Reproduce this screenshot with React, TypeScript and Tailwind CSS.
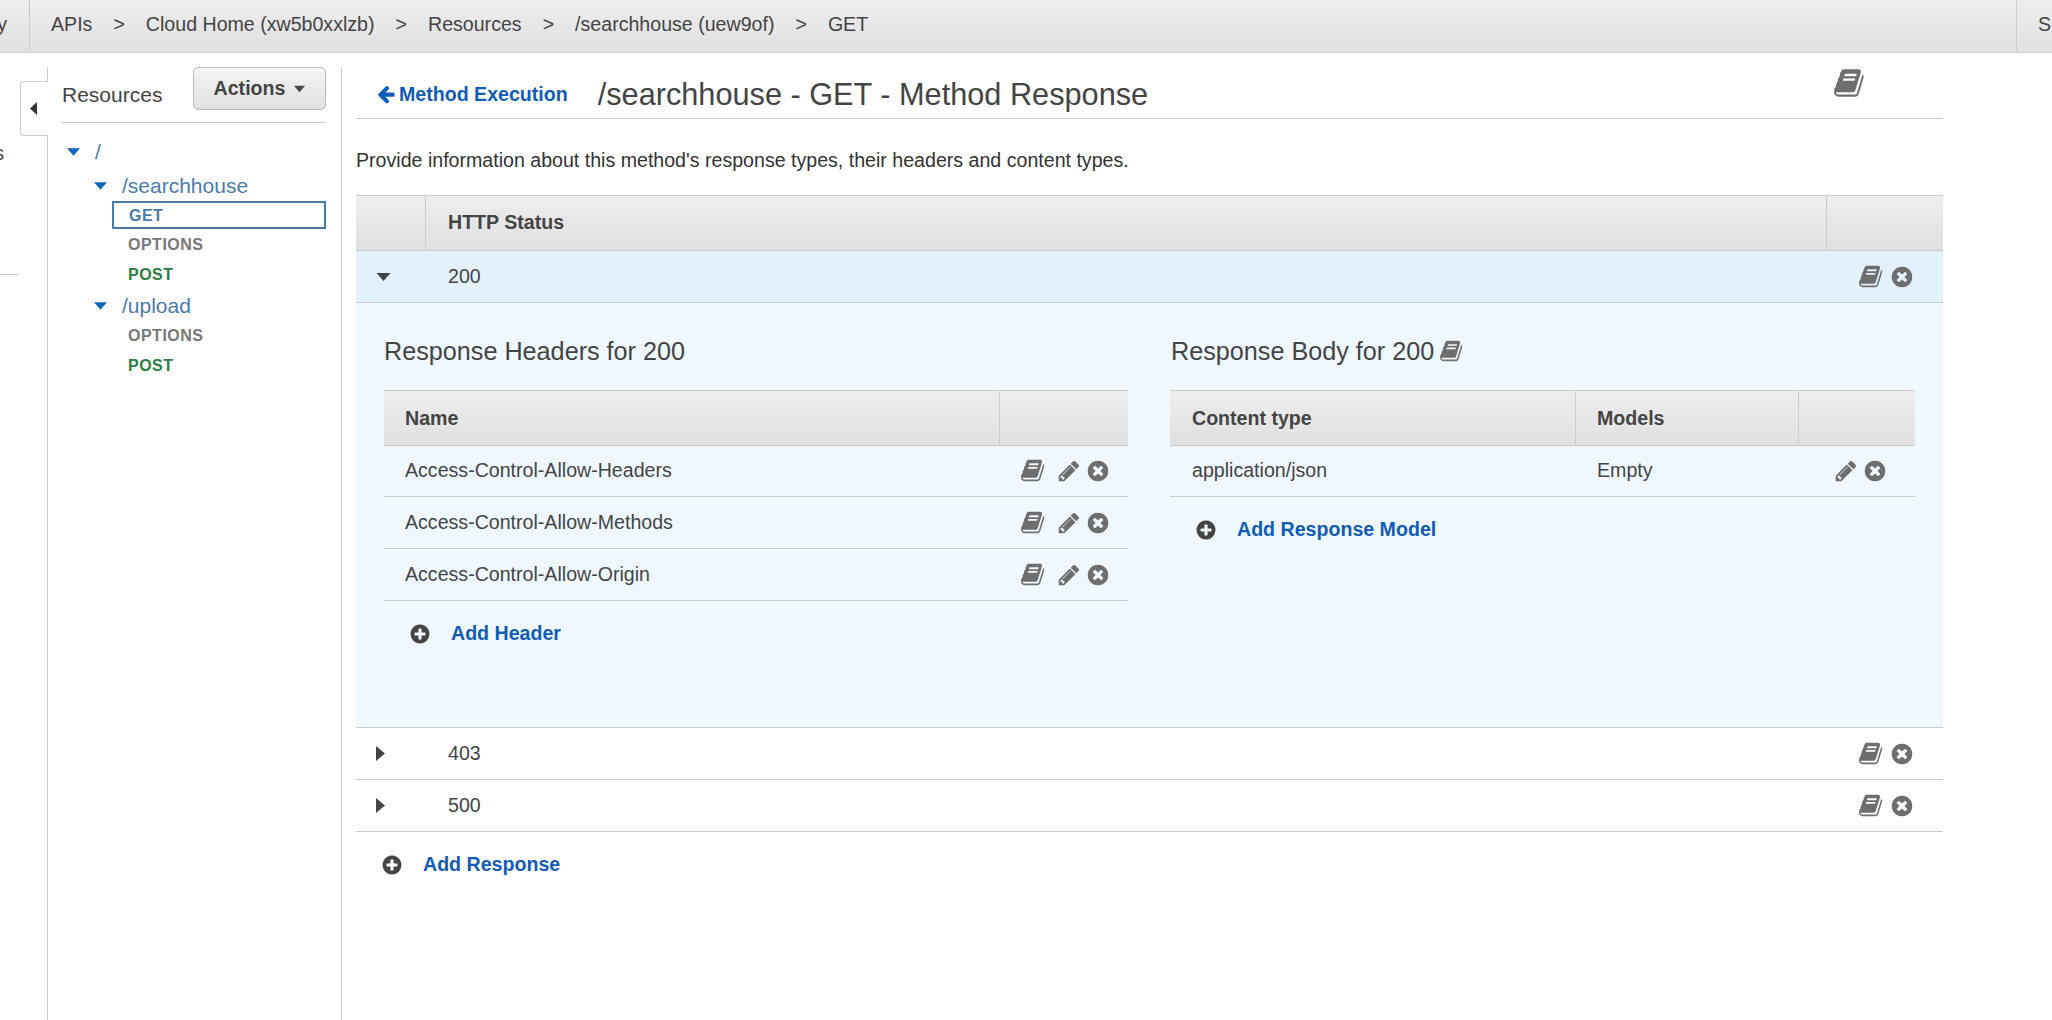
const BOOK = "M1639 478q40 57 18 129l-275 906q-19 64-76.5 107.5t-122.5 43.5h-923q-77 0-148.5-53.5t-99.5-131.5q-24-67-2-127 0-4 3-27t4-37q1-8-3-21.5t-3-19.5q2-11 8-21t16.5-23.5 16.5-23.5q23-38 45-91.5t30-91.5q3-10 .5-30t-.5-28q3-11 17-28t17-23q21-36 42-92t25-90q1-9-2.5-32t.5-28q4-13 22-30.5t22-22.5q19-26 42.5-84.5t27.5-96.5q1-8-3-25.5t-2-26.5q2-8 9-18t18-23 17-21q8-12 16.5-30.5t15-35 16-36 19.5-32 26.5-23.5 36-11.5 47.5 5.5l-1 3q38-9 51-9h761q74 0 114 56t18 130l-274 906q-36 119-71.5 153.5t-128.5 34.5h-869q-27 0-38 15-11 16-1 43 24 70 144 70h923q29 0 56-15.5t35-41.5l300-987q7-22 5-57 38 15 59 43zm-1064 2q-4 13 2 22.5t20 9.5h608q13 0 25.5-9.5t16.5-22.5l21-64q4-13-2-22.5t-20-9.5h-608q-13 0-25.5 9.5t-16.5 22.5zm-83 256q-4 13 2 22.5t20 9.5h608q13 0 25.5-9.5t16.5-22.5l21-64q4-13-2-22.5t-20-9.5h-608q-13 0-25.5 9.5t-16.5 22.5z";
const PENCIL = "M491 1536l91-91-235-235-91 91v107h128v128h107zm523-928q0-22-22-22-10 0-17 7l-542 542q-7 7-7 17 0 22 22 22 10 0 17-7l542-542q7-7 7-17zm-54-192l416 416-832 832h-416v-416zm683 96q0 53-37 90l-166 166-416-416 166-165q36-38 90-38 53 0 91 38l235 234q37 39 37 91z";
const TIMES = "M1277 1122q0-26-19-45l-181-181 181-181q19-19 19-45 0-27-19-46l-90-90q-19-19-46-19-26 0-45 19l-181 181-181-181q-19-19-45-19-27 0-46 19l-90 90q-19 19-19 46 0 26 19 45l181 181-181 181q-19 19-19 45 0 27 19 46l90 90q19 19 46 19 26 0 45-19l181-181 181 181q19 19 45 19 27 0 46-19l90-90q19-19 19-46zm387-226q0 209-103 385.5t-279.5 279.5-385.5 103-385.5-103-279.5-279.5-103-385.5 103-385.5 279.5-279.5 385.5-103 385.5 103 279.5 279.5 103 385.5z";
const PLUS = "M1344 960v-128q0-26-19-45t-45-19h-256v-256q0-26-19-45t-45-19h-128q-26 0-45 19t-19 45v256h-256q-26 0-45 19t-19 45v128q0 26 19 45t45 19h256v256q0 26 19 45t45 19h128q26 0 45-19t19-45v-256h256q26 0 45-19t19-45zm320-64q0 209-103 385.5t-279.5 279.5-385.5 103-385.5-103-279.5-279.5-103-385.5 103-385.5 279.5-279.5 385.5-103 385.5 103 279.5 279.5 103 385.5z";
const ARROW = "M1664 896v128q0 53-32.5 90.5t-84.5 37.5h-704l293 294q38 36 38 90t-38 90l-75 76q-37 37-90 37-52 0-91-37l-651-652q-37-37-37-90 0-52 37-91l651-650q38-38 91-38 52 0 90 38l75 74q38 38 38 91t-38 91l-293 293h704q52 0 84.5 37.5t32.5 90.5z";

function Fa({ d, size, className }: { d: string; size: number; className?: string }) {
  return (
    <svg width={size} height={size} viewBox="0 0 1792 1792" fill="currentColor" className={className}>
      <path d={d} />
    </svg>
  );
}

function Caret({ dir = "down", className }: { dir?: "down" | "right" | "left"; className?: string }) {
  const pts = dir === "down" ? "0,0 14,0 7,8" : dir === "right" ? "0,0 9,7.5 0,15" : "7,0 7,13 0,6.5";
  const w = dir === "down" ? 14 : dir === "right" ? 9 : 7;
  const h = dir === "down" ? 8 : dir === "right" ? 15 : 13;
  return (
    <svg width={w} height={h} viewBox={`0 0 ${w} ${h}`} fill="currentColor" className={className}>
      <polygon points={pts} />
    </svg>
  );
}

function Crumb({ label }: { label: string }) {
  return <span className="mx-[21px]">{label}</span>;
}

function Breadcrumbs() {
  return (
    <div className="h-[53px] flex border-b border-[#cfcfcf] bg-gradient-to-b from-[#eeeeee] to-[#e0e0e0] text-[19.6px] text-[#444] overflow-hidden">
      <div className="w-[30px] h-[51px] shrink-0 border-r border-[#cccccc] overflow-hidden flex justify-end items-center pr-[22px] pb-[2px]">
        <span className="whitespace-nowrap">y</span>
      </div>
      <div className="flex-1 flex items-center pb-[2px]">
        <span className="ml-[21px]">APIs</span>
        <Crumb label=">" />
        <span>Cloud Home (xw5b0xxlzb)</span>
        <Crumb label=">" />
        <span>Resources</span>
        <Crumb label=">" />
        <span>/searchhouse (uew9of)</span>
        <Crumb label=">" />
        <span>GET</span>
      </div>
      <div className="w-[36px] h-[51px] shrink-0 border-l border-[#cccccc] pl-[21px] pb-[2px] flex items-center">S</div>
    </div>
  );
}

function LeftStub() {
  return (
    <div className="w-[48px] shrink-0 mt-[14px] border-r border-[#cccccc] relative">
      <div className="absolute left-[20px] top-[14px] w-[28px] h-[55px] bg-white border border-r-0 border-[#cccccc] rounded-l-[4px] flex items-center justify-center pr-[2px] text-[#333]">
        <Caret dir="left" />
      </div>
      <div className="w-[4px] overflow-hidden flex justify-end mt-[75px] text-[19.6px] text-[#444] leading-[22px]">
        <span>s</span>
      </div>
      <div className="w-[18px] border-b border-[#cccccc] mt-[110px]" />
    </div>
  );
}

function Method({ name, color, selected }: { name: string; color: string; selected?: boolean }) {
  return (
    <div className={`ml-[50px] h-[28px] mb-[2px] flex items-center text-[16px] font-bold tracking-[0.5px] ${color} ${selected ? "border-2 border-[#4a7aac] pl-[15px] pt-[1px]" : "pl-[16px]"}`}>
      {name}
    </div>
  );
}

function TreeNode({ label, indent, className }: { label: string; indent: string; className?: string }) {
  return (
    <div className={`flex items-center text-[21px] text-[#4a7aac] h-[30px] ${indent} ${className ?? ""}`}>
      <Caret className="text-[#1166bb] w-[13px] mr-[15px]" />
      <span>{label}</span>
    </div>
  );
}

function ResourceTree() {
  return (
    <div className="w-[294px] shrink-0 mt-[14px] border-r border-[#cccccc] pl-[14px] pr-[15px]">
      <div className="h-[56px] flex items-start justify-between border-b border-[#cccccc]">
        <span className="text-[21px] text-[#444] mt-[12px]">Resources</span>
        <button className="w-[133px] h-[43px] border border-[#bbbbbb] rounded-[5px] bg-gradient-to-b from-[#f5f5f5] to-[#e0e0e0] text-[19.6px] font-bold text-[#444] flex items-center justify-center gap-[9px]">
          Actions
          <Caret className="w-[11px] text-[#444]" />
        </button>
      </div>
      <div className="mt-[14px]">
        <TreeNode label="/" indent="pl-[5px]" />
        <TreeNode label="/searchhouse" indent="pl-[32px] mt-[4px]" />
        <Method name="GET" color="text-[#4a7aac]" selected />
        <Method name="OPTIONS" color="text-[#777]" />
        <Method name="POST" color="text-[#2b7d40]" />
        <TreeNode label="/upload" indent="pl-[32px] mt-[2px] mb-[1px]" />
        <Method name="OPTIONS" color="text-[#777]" />
        <Method name="POST" color="text-[#2b7d40]" />
      </div>
    </div>
  );
}

function AddLink({ label, className }: { label: string; className?: string }) {
  return (
    <div className={`flex items-center text-[19.6px] font-bold text-[#105cb6] ${className ?? ""}`}>
      <Fa d={PLUS} size={22} className="text-[#444] mr-[20px]" />
      <span>{label}</span>
    </div>
  );
}

function HeaderCell({ children, className }: { children?: React.ReactNode; className?: string }) {
  return <div className={`h-full flex items-center font-bold ${className ?? ""}`}>{children}</div>;
}

function ActionIcons({ book }: { book?: boolean }) {
  return (
    <div className="flex items-center text-[#6e6e6e]">
      {book && <Fa d={BOOK} size={25} className="mr-[11px]" />}
      <Fa d={PENCIL} size={24} className="mr-[5px]" />
      <Fa d={TIMES} size={24} />
    </div>
  );
}

function HeadersTable() {
  const rows = ["Access-Control-Allow-Headers", "Access-Control-Allow-Methods", "Access-Control-Allow-Origin"];
  return (
    <div className="w-[744px]">
      <h3 className="text-[25.2px] text-[#444] leading-[28px]">Response Headers for 200</h3>
      <div className="mt-[25px] h-[56px] flex border-y border-[#cccccc] bg-gradient-to-b from-[#eeeeee] to-[#e0e0e0]">
        <HeaderCell className="w-[616px] pl-[21px] pt-[1px] border-r border-[#cccccc]">Name</HeaderCell>
      </div>
      <div className="-mt-[1px]">
        {rows.map((r) => (
          <div key={r} className="h-[52px] flex items-center justify-between border-b border-[#cccccc] pl-[21px] pr-[18px]">
            <span className="pt-[1px]">{r}</span>
            <ActionIcons book />
          </div>
        ))}
      </div>
      <AddLink label="Add Header" className="ml-[25px] mt-[18px]" />
    </div>
  );
}

function BodyTable() {
  return (
    <div className="w-[745px]">
      <h3 className="text-[25.2px] text-[#444] leading-[28px] flex items-center gap-[6px] pl-[1px]">
        Response Body for 200
        <Fa d={BOOK} size={24} className="text-[#6e6e6e]" />
      </h3>
      <div className="mt-[25px] h-[56px] flex border-y border-[#cccccc] bg-gradient-to-b from-[#eeeeee] to-[#e0e0e0]">
        <HeaderCell className="w-[406px] pl-[22px] pt-[1px] border-r border-[#cccccc]">Content type</HeaderCell>
        <HeaderCell className="w-[223px] pl-[21px] pt-[1px] border-r border-[#cccccc]">Models</HeaderCell>
      </div>
      <div className="-mt-[1px] h-[52px] flex items-center border-b border-[#cccccc] pl-[22px] pr-[28px]">
        <span className="w-[405px] shrink-0 pt-[1px]">application/json</span>
        <span className="flex-1 pt-[1px]">Empty</span>
        <ActionIcons />
      </div>
      <AddLink label="Add Response Model" className="ml-[25px] mt-[18px]" />
    </div>
  );
}

function StatusRow({ code, open }: { code: string; open?: boolean }) {
  return (
    <div className={`h-[52px] flex items-center border-b border-[#cccccc] ${open ? "bg-[#e3f0fd]" : ""}`}>
      <div className="w-[69px] shrink-0 pl-[20px] text-[#444]">
        {open ? <Caret className="w-[15px]" /> : <Caret dir="right" />}
      </div>
      <span className="flex-1 ml-[23px]">{code}</span>
      <div className="flex items-center text-[#6e6e6e] mr-[29px]">
        <Fa d={BOOK} size={25} className="mr-[6px]" />
        <Fa d={TIMES} size={24} />
      </div>
    </div>
  );
}

export default function App() {
  return (
    <div className="w-[2052px] h-[1020px] overflow-hidden bg-white flex flex-col font-['Liberation_Sans',Arial,sans-serif] text-[19.6px] text-[#444]">
      <Breadcrumbs />
      <div className="flex-1 flex min-h-0">
        <LeftStub />
        <ResourceTree />
        <div className="w-[1587px] ml-[14px] shrink-0">
          <div className="h-[66px] flex items-center border-b border-[#cccccc] pl-[20px] pr-[77px]">
            <div className="flex items-center text-[#105cb6] font-bold text-[19.6px] mt-[18px]">
              <Fa d={ARROW} size={20} className="mr-[3px]" />
              <span>Method Execution</span>
            </div>
            <h2 className="flex-1 text-[30.7px] ml-[30px] text-[#444] mt-[20px]">/searchhouse - GET - Method Response</h2>
            <Fa d={BOOK} size={32} className="text-[#6e6e6e] mb-[5px]" />
          </div>
          <p className="mt-[29px] leading-[24px] text-[#333]">Provide information about this method's response types, their headers and content types.</p>
          <div className="mt-[23px] h-[56px] flex border-y border-[#cccccc] bg-gradient-to-b from-[#eeeeee] to-[#e0e0e0]">
            <div className="w-[70px] border-r border-[#cccccc]" />
            <HeaderCell className="w-[1401px] pl-[22px] border-r border-[#cccccc]">HTTP Status</HeaderCell>
          </div>
          <StatusRow code="200" open />
          <div className="h-[425px] bg-[#f0f8ff] border-b border-[#cccccc] flex gap-[42px] px-[28px] pt-[34px]">
            <HeadersTable />
            <BodyTable />
          </div>
          <StatusRow code="403" />
          <StatusRow code="500" />
          <AddLink label="Add Response" className="ml-[25px] mt-[18px]" />
        </div>
      </div>
    </div>
  );
}
